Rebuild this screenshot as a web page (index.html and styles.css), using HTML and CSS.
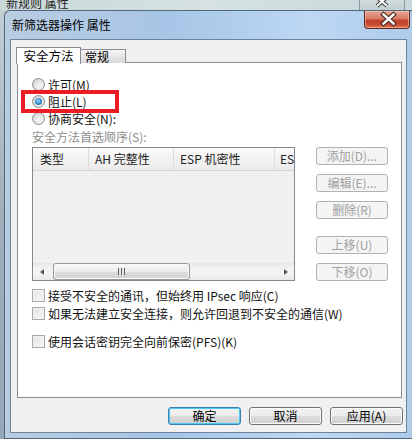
FILE: index.html
```html
<!DOCTYPE html>
<html lang="zh-CN">
<head>
    <meta charset="utf-8">
    <title>新筛选器操作 属性</title>
    <link rel="stylesheet" href="styles.css">
</head>
<body>
    <!-- window behind the dialog -->
    <div class="back-title">
        <span class="back-name">新规则 属性</span>
        <span class="back-close">
            <svg width="44" height="10" viewBox="0 0 44 10">
                <path d="M17 -3 L27 6 M27 -3 L17 6" stroke="#3a3a3a" stroke-width="4" />
                <path d="M17 -3 L27 6 M27 -3 L17 6" stroke="#fff" stroke-width="2" />
            </svg>
        </span>
    </div>

    <div class="dialog">
        <!-- Title bar -->
        <div class="titlebar">
            <span class="title">新筛选器操作 属性</span>
            <span class="close">
                <svg width="46" height="18" viewBox="0 0 46 18">
                    <path d="M19.5 4.5 L29.5 13.5 M29.5 4.5 L19.5 13.5" stroke="#4a2a24" stroke-width="4.6" stroke-linecap="square" />
                    <path d="M19.5 4.5 L29.5 13.5 M29.5 4.5 L19.5 13.5" stroke="#fff" stroke-width="2.4" stroke-linecap="square" />
                </svg>
            </span>
        </div>

        <div class="client">
            <div class="tabs">
                <div class="tab active">安全方法</div>
                <div class="tab">常规</div>
            </div>

            <div class="page">
                <div class="radio"><span class="dot"></span>许可(M)</div>
                <div class="radio checked"><span class="dot"></span>阻止(L)</div>
                <div class="radio"><span class="dot"></span>协商安全(N):</div>

                <div class="caption">安全方法首选顺序(S):</div>

                <div class="methods">
                    <div class="listbox">
                        <div class="list-head">
                            <span class="col c1">类型</span>
                            <span class="col c2">AH 完整性</span>
                            <span class="col c3">ESP 机密性</span>
                            <span class="col c4">ESI</span>
                        </div>
                        <div class="list-body"></div>
                        <div class="hscroll">
                            <span class="arrow left"></span>
                            <span class="track"><span class="thumb"><span class="grip"></span></span></span>
                            <span class="arrow right"></span>
                        </div>
                    </div>

                    <div class="side-buttons">
                        <button class="btn disabled">添加(D)...</button>
                        <button class="btn disabled">编辑(E)...</button>
                        <button class="btn disabled">删除(R)</button>
                        <button class="btn disabled move">上移(U)</button>
                        <button class="btn disabled">下移(O)</button>
                    </div>
                </div>

                <div class="check"><span class="box"></span>接受不安全的通讯，但始终用 IPsec 响应(C)</div>
                <div class="check"><span class="box"></span>如果无法建立安全连接，则允许回退到不安全的通信(W)</div>
                <div class="check spaced"><span class="box"></span>使用会话密钥完全向前保密(PFS)(K)</div>

                <!-- red annotation box -->
                <div class="mark"></div>
            </div>

            <div class="footer">
                <button class="btn default">确定</button>
                <button class="btn">取消</button>
                <button class="btn">应用(A)</button>
            </div>
        </div>
    </div>
</body>
</html>
```

FILE: styles.css
```css
/* Reset */
* {
    margin: 0;
    padding: 0;
    box-sizing: border-box;
}

body {
    width: 412px;
    height: 439px;
    overflow: hidden;
    font-family: "Noto Sans CJK SC", sans-serif;
    font-size: 12px;
    color: #1a1a1a;
    background: linear-gradient(180deg, #c3d0d4, #9eaebb 50%, #95a6b6);
}

/* Window behind */
.back-title {
    height: 10px;
    display: flex;
    overflow: hidden;
    background: linear-gradient(90deg, #c9d7d9, #d6e2e2 50%, #c8d8da);
}

.back-name {
    margin: -3px 0 0 6px;
    line-height: 12px;
    color: #222;
}

.back-close {
    margin-left: auto;
    margin-right: 7px;
    width: 46px;
    height: 10px;
    border-left: 1px solid #8a9aa2;
    border-right: 1px solid #8a9aa2;
    background: linear-gradient(180deg, #d2dcdd, #c3cfd2);
}

.back-close svg {
    display: block;
}

/* Dialog frame */
.dialog {
    margin-left: 4px;
    width: 408px;
    height: 429px;
    border: 1px solid #52667c;
    border-right: none;
    border-radius: 6px 0 0 0;
    padding: 0 5px 0 5px;
    background: linear-gradient(90deg, #b9cde1, #a7c5e6 40%, #bcd8f3 75%, #aecbea);
    display: flex;
    flex-direction: column;
}

.titlebar {
    height: 28px;
    display: flex;
    align-items: flex-start;
}

.title {
    padding-left: 2px;
    line-height: 28px;
    color: #000;
}

.close {
    margin-left: auto;
    margin-right: -3px;
    width: 46px;
    height: 18px;
    border: 1px solid #5e2a22;
    border-top: none;
    border-radius: 0 0 4px 4px;
    background: linear-gradient(180deg, #e6a898 0%, #d77a63 45%, #c2402c 55%, #c84a33 80%, #dd7a5a 100%);
    box-shadow: inset 0 0 0 1px rgba(255, 210, 190, 0.5);
}

.close svg {
    display: block;
    margin: -1px 0 0 -1px;
}

/* Client area */
.client {
    height: 394px;
    background: #f0f0f0;
    border: 1px solid #6d829c;
    padding: 7px 4px 0 6px;
}

.tabs {
    display: flex;
    align-items: flex-end;
    height: 16px;
    position: relative;
    z-index: 1;
}

.tab {
    height: 14px;
    width: 45px;
    margin-left: -1px;
    padding-left: 4px;
    line-height: 13px;
    border: 1px solid #898c95;
    border-bottom: none;
    background: linear-gradient(180deg, #f6f6f6, #e3e3e3 60%, #d9d9d9);
    color: #000;
}

.tab.active {
    height: 17px;
    width: 65px;
    margin-bottom: -1px;
    padding-left: 0;
    text-align: center;
    line-height: 16px;
    background: #fff;
    font-size: 12.5px;
}

.tab.active + .tab {
    margin-left: 0;
    border-left: none;
}

/* Tab page */
.page {
    position: relative;
    height: 336px;
    margin-top: -1px;
    background: #fff;
    border: 1px solid #898c95;
    padding: 13px 0 0 14px;
}

.radio,
.check {
    display: flex;
    align-items: center;
    gap: 3px;
    height: 17px;
    color: #111;
}

.dot {
    width: 13px;
    height: 13px;
    border-radius: 50%;
    border: 1px solid #8c8e90;
    background: radial-gradient(circle at 60% 65%, #f6f6f6 0%, #e2e2e2 55%, #c9c9c9 100%);
    display: flex;
    align-items: center;
    justify-content: center;
}

.radio.checked .dot::after {
    content: '';
    width: 7px;
    height: 7px;
    border-radius: 50%;
    background: radial-gradient(circle at 45% 40%, #a6dcff 0%, #3d94d8 45%, #16507f 100%);
}

.caption {
    margin-top: 2px;
    line-height: 16px;
    color: #8d8d8d;
}

.methods {
    display: flex;
    gap: 21px;
    margin-top: 2px;
}

/* List view */
.listbox {
    width: 263px;
    height: 134px;
    border: 1px solid #828790;
    background: #f0f0f0;
    display: flex;
    flex-direction: column;
}

.list-head {
    display: flex;
    height: 23px;
    border-bottom: 1px solid #d5d5d5;
    background: linear-gradient(180deg, #fafafa, #f1f1f1 50%, #ececec);
    overflow: hidden;
    white-space: nowrap;
}

.col {
    line-height: 22px;
    padding-left: 6px;
    border-right: 1px solid #dcdcdc;
    color: #222;
    flex-shrink: 0;
}

.c1 { width: 56px; padding-left: 7px; }
.c2 { width: 85px; }
.c3 { width: 101px; }
.c4 { border-right: none; padding-left: 5px; }

.list-body {
    flex: 1;
}

.hscroll {
    height: 17px;
    display: flex;
    background: linear-gradient(180deg, #e6e6e6, #f3f3f3 30%, #f3f3f3 70%, #e8e8e8);
}

.arrow {
    width: 17px;
    display: flex;
    align-items: center;
    justify-content: center;
}

.arrow::after {
    content: '';
    border-top: 3.5px solid transparent;
    border-bottom: 3.5px solid transparent;
}

.arrow.left::after {
    border-right: 4px solid #5a5a5a;
}

.arrow.right::after {
    border-left: 4px solid #5a5a5a;
}

.track {
    flex: 1;
    padding: 0 3px;
}

.thumb {
    display: flex;
    align-items: center;
    justify-content: center;
    width: 137px;
    height: 17px;
    border: 1px solid #979797;
    border-radius: 3px;
    background: linear-gradient(180deg, #f7f7f7, #ebebeb 50%, #dcdcdc 51%, #d3d3d3);
    box-shadow: inset 0 0 0 1px #fbfbfb;
}

.grip {
    width: 7px;
    height: 7px;
    background: repeating-linear-gradient(90deg, #5e5e5e 0 1px, #e8e8e8 1px 3px);
}

/* Push buttons */
.btn {
    font-family: "Noto Sans CJK SC", sans-serif;
    font-size: 12px;
    line-height: 16px;
    height: 18px;
    width: 72px;
    color: #000;
    border: 1px solid #707070;
    border-radius: 3px;
    background: linear-gradient(180deg, #f2f2f2 0%, #ebebeb 48%, #dddddd 52%, #cfcfcf 100%);
    box-shadow: inset 0 0 0 1px #fcfcfc;
}

.btn.disabled {
    color: #a0a0a0;
    border-color: #adb2b5;
    background: #f4f4f4;
    box-shadow: none;
}

.side-buttons {
    display: flex;
    flex-direction: column;
    gap: 9px;
}

.side-buttons .move {
    margin-top: 8px;
}

/* Checkboxes */
.check {
    height: 18px;
}

.methods + .check {
    margin-top: 5px;
}

.check.spaced {
    margin-top: 10px;
}

.box {
    width: 13px;
    height: 13px;
    border: 1px solid #a9a9a9;
    background: linear-gradient(135deg, #e4e4e4, #f7f7f7);
    box-shadow: inset 0 0 0 1px #f2f2f2;
}

/* Red annotation */
.mark {
    position: absolute;
    left: 3px;
    top: 27px;
    width: 98px;
    height: 23px;
    border: 4px solid #ec1c24;
}

/* Dialog buttons */
.footer {
    display: flex;
    justify-content: flex-end;
    gap: 8px;
    margin-top: 9px;
    margin-right: -1px;
}

.footer .btn {
    width: 73px;
}

.footer .btn.default {
    border-color: #3c7fb1;
    box-shadow: inset 0 0 0 1px #48c8f5;
}
```
